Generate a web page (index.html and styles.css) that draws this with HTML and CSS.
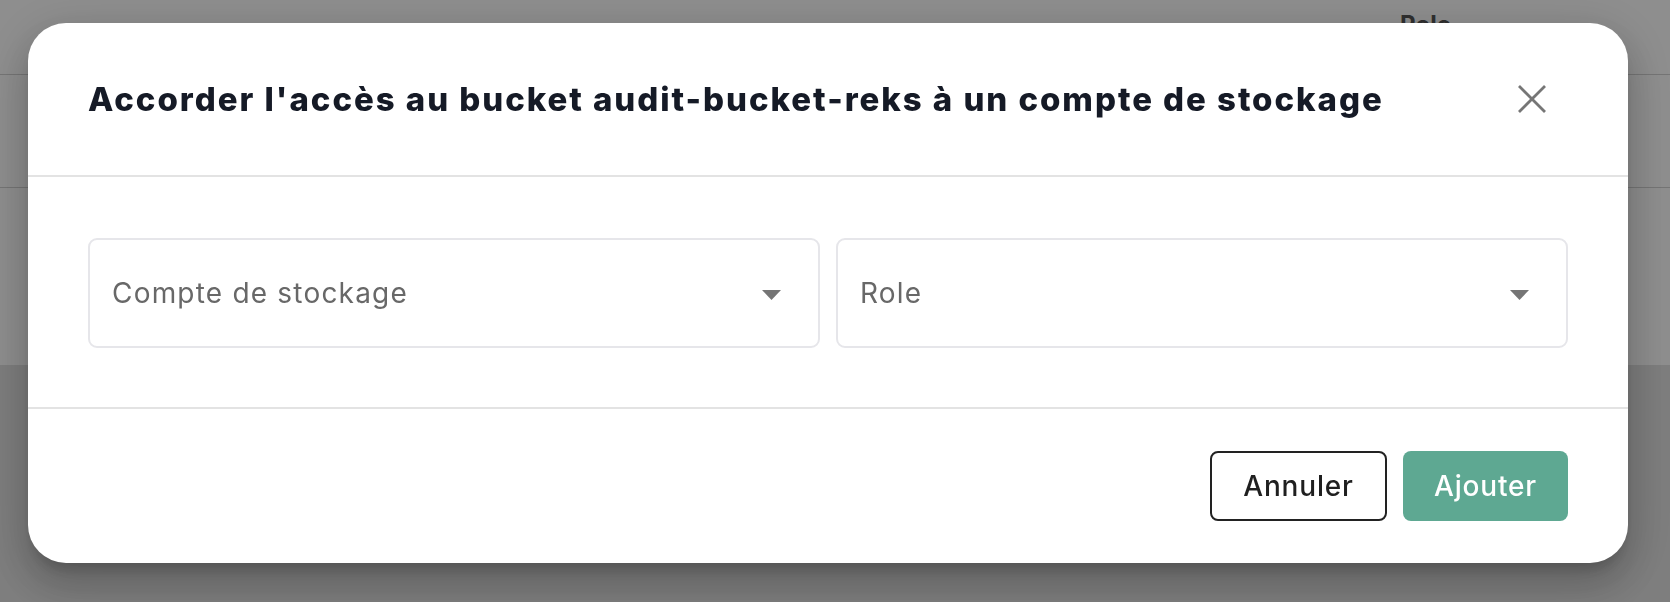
FILE: index.html
```html
<!DOCTYPE html>
<html lang="fr">
<head>
<meta charset="utf-8">
<title>Accorder l'accès</title>
<link rel="stylesheet" href="styles.css">
</head>
<body>
<div class="page">
  <div class="page-head"><span class="col-role">Role</span></div>
  <div class="page-row"></div>
  <div class="page-gap"></div>
  <div class="page-foot"></div>
</div>
<div class="backdrop"></div>
<div class="modal" role="dialog">
  <div class="modal-header">
    <h2 class="modal-title">Accorder l'accès au bucket audit-bucket-reks à un compte de stockage</h2>
    <button class="close-btn" aria-label="Fermer">
      <svg width="28" height="28" viewBox="0 0 28 28"><path d="M1 1 L27 27 M27 1 L1 27" stroke="#767676" stroke-width="2.8" fill="none"/></svg>
    </button>
  </div>
  <div class="modal-body">
    <div class="select">
      <span class="select-label">Compte de stockage</span>
      <svg class="caret" width="19" height="10" viewBox="0 0 19 10"><polygon points="0,0 19,0 9.5,10" fill="#757575"/></svg>
    </div>
    <div class="select">
      <span class="select-label">Role</span>
      <svg class="caret" width="19" height="10" viewBox="0 0 19 10"><polygon points="0,0 19,0 9.5,10" fill="#757575"/></svg>
    </div>
  </div>
  <div class="modal-footer">
    <button class="btn btn-cancel">Annuler</button>
    <button class="btn btn-primary">Ajouter</button>
  </div>
</div>
</body>
</html>
```
FILE: styles.css
```css
html, body {
  margin: 0;
  padding: 0;
}
body {
  width: 1670px;
  height: 602px;
  overflow: hidden;
  font-family: "Inter", "Open Sans", sans-serif;
  background: #fff;
}
.page {
  display: flex;
  flex-direction: column;
  height: 602px;
}
.page-head {
  height: 74px;
  border-bottom: 1px solid #d2d2d2;
  box-sizing: content-box;
}
.col-role {
  display: block;
  margin-left: 1400px;
  padding-top: 10px;
  font-size: 24px;
  font-weight: 700;
  color: #555;
}
.page-row {
  height: 112px;
  border-bottom: 1px solid #d2d2d2;
}
.page-gap {
  height: 177px;
}
.page-foot {
  flex: 1;
  background: #e2e2e2;
}
.backdrop {
  position: fixed;
  inset: 0;
  background: rgba(0, 0, 0, 0.445);
}
.modal {
  position: fixed;
  left: 28px;
  top: 23px;
  width: 1600px;
  height: 540px;
  background: #fff;
  border-radius: 38px;
  box-shadow: 0 11px 15px -7px rgba(0,0,0,0.2), 0 24px 38px 3px rgba(0,0,0,0.14), 0 9px 46px 8px rgba(0,0,0,0.12);
  display: flex;
  flex-direction: column;
  overflow: hidden;
}
.modal-header {
  height: 152px;
  flex: none;
  border-bottom: 2px solid #e3e3e3;
  display: flex;
  align-items: center;
  justify-content: space-between;
  padding: 0 82px 0 60px;
}
.modal-title {
  margin: 0;
  font-size: 33px;
  font-weight: 800;
  color: #151a26;
  letter-spacing: 1.95px;
  white-space: nowrap;
}
.close-btn {
  border: 0;
  background: none;
  padding: 0;
  width: 28px;
  height: 28px;
  display: flex;
}
.modal-body {
  flex: none;
  height: 232px;
  box-sizing: border-box;
  padding: 61px 60px;
  border-bottom: 2px solid #e3e3e3;
  display: grid;
  grid-template-columns: 1fr 1fr;
  gap: 16px;
}
.select {
  height: 110px;
  box-sizing: border-box;
  border: 2px solid #e6e6ea;
  border-radius: 9px;
  display: flex;
  align-items: center;
  justify-content: space-between;
  padding: 0 37px 0 22px;
}
.select-label {
  font-size: 28px;
  color: #686868;
  font-weight: 400;
  letter-spacing: 1.2px;
}
.caret {
  display: block;
  margin-top: 4px;
}
.modal-footer {
  flex: 1;
  display: flex;
  align-items: center;
  justify-content: flex-end;
  gap: 16px;
  padding: 0 60px;
}
.btn {
  height: 70px;
  box-sizing: border-box;
  border-radius: 8px;
  font-family: "Inter", "Open Sans", sans-serif;
  font-size: 28px;
  font-weight: 500;
  letter-spacing: 0.8px;
  display: flex;
  align-items: center;
  justify-content: center;
}
.btn-cancel {
  width: 177px;
  background: #fff;
  border: 2px solid #222;
  color: #1f1f1f;
}
.btn-primary {
  width: 165px;
  background: #5ea892;
  border: 0;
  color: #fff;
}
```
